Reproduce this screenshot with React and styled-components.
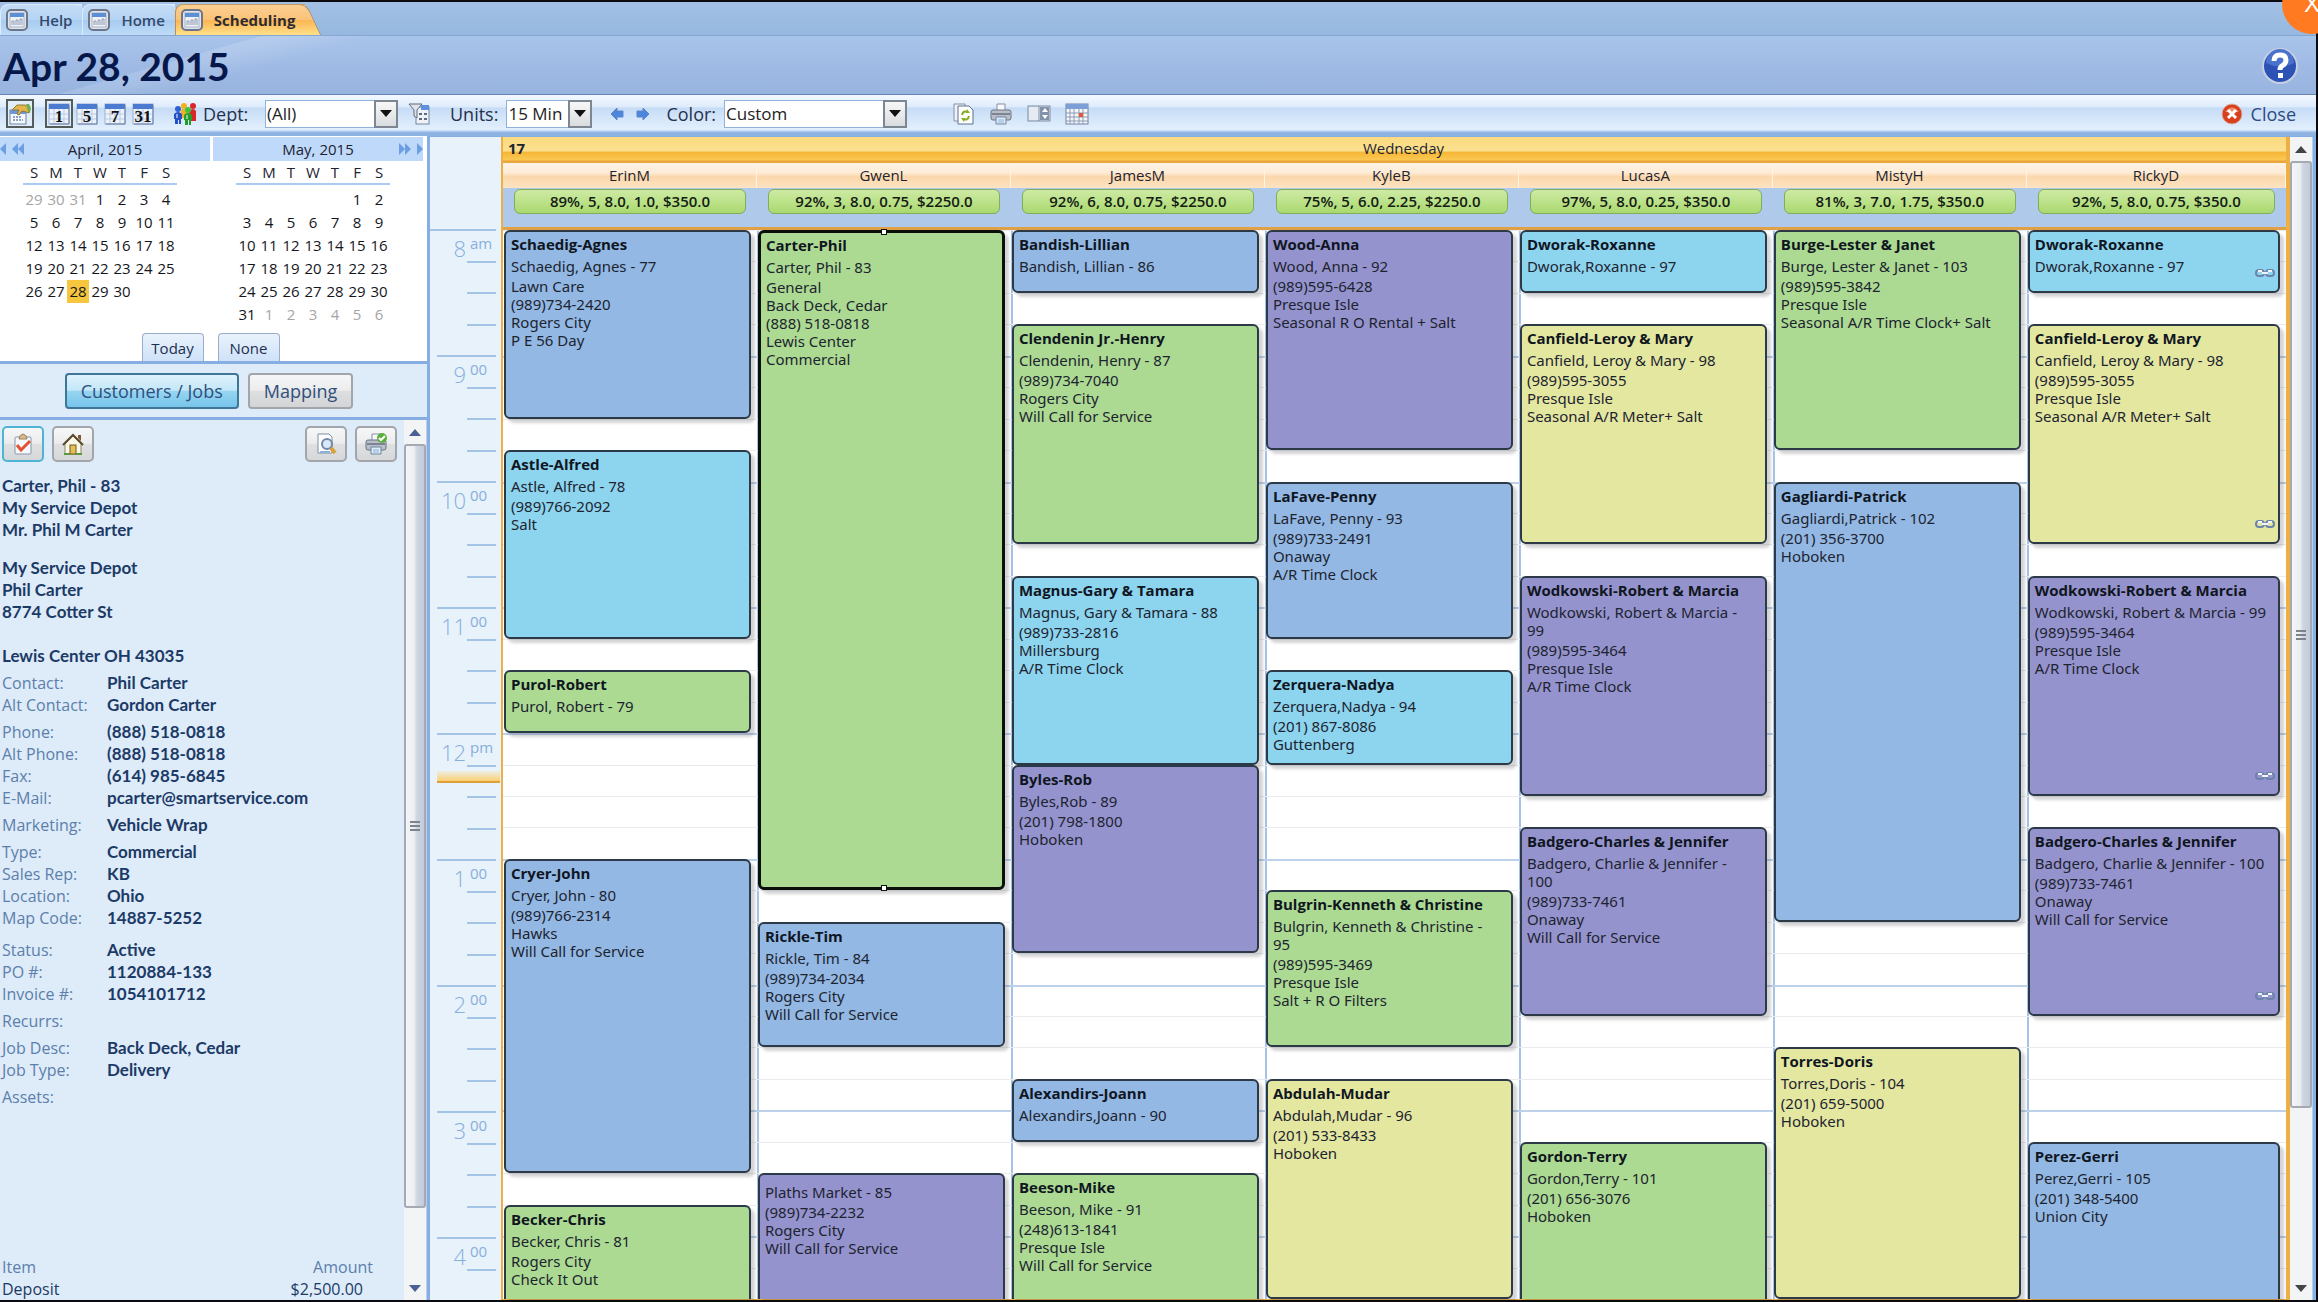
import React from 'react';
import styled, { createGlobalStyle, css } from 'styled-components';

const SLOT_COUNT = 34;

const COLORS = {
  blue: '#93b8e4',
  green: '#acda92',
  cyan: '#8dd4ef',
  purple: '#9593cd',
  yellow: '#e4e7a0',
};

const HOURS = [
  ['8', 'am'],
  ['9', '00'],
  ['10', '00'],
  ['11', '00'],
  ['12', 'pm'],
  ['1', '00'],
  ['2', '00'],
  ['3', '00'],
  ['4', '00'],
];

// from / to are 15 minute slots counted from 8 am
const TECHS = [
  {
    name: 'ErinM',
    stats: '89%, 5, 8.0, 1.0, $350.0',
    jobs: [
      { from: 0, to: 6, color: 'blue', title: 'Schaedig-Agnes', who: 'Schaedig, Agnes - 77', lines: ['Lawn Care', '(989)734-2420', 'Rogers City', 'P E 56 Day'] },
      { from: 7, to: 13, color: 'cyan', title: 'Astle-Alfred', who: 'Astle, Alfred - 78', lines: ['(989)766-2092', 'Salt'] },
      { from: 14, to: 16, color: 'green', title: 'Purol-Robert', who: 'Purol, Robert - 79', lines: [] },
      { from: 20, to: 30, color: 'blue', title: 'Cryer-John', who: 'Cryer, John - 80', lines: ['(989)766-2314', 'Hawks', 'Will Call for Service'] },
      { from: 31, to: 34, open: true, color: 'green', title: 'Becker-Chris', who: 'Becker, Chris - 81', lines: ['Rogers City', 'Check It Out'] },
    ],
  },
  {
    name: 'GwenL',
    stats: '92%, 3, 8.0, 0.75, $2250.0',
    jobs: [
      { from: 0, to: 21, selected: true, color: 'green', title: 'Carter-Phil', who: 'Carter, Phil - 83', lines: ['General', 'Back Deck, Cedar', '(888) 518-0818', 'Lewis Center', 'Commercial'] },
      { from: 22, to: 26, color: 'blue', title: 'Rickle-Tim', who: 'Rickle, Tim - 84', lines: ['(989)734-2034', 'Rogers City', 'Will Call for Service'] },
      { from: 30, to: 34, open: true, color: 'purple', who: 'Plaths Market - 85', lines: ['(989)734-2232', 'Rogers City', 'Will Call for Service'] },
    ],
  },
  {
    name: 'JamesM',
    stats: '92%, 6, 8.0, 0.75, $2250.0',
    jobs: [
      { from: 0, to: 2, color: 'blue', title: 'Bandish-Lillian', who: 'Bandish, Lillian - 86', lines: [] },
      { from: 3, to: 10, color: 'green', title: 'Clendenin Jr.-Henry', who: 'Clendenin, Henry - 87', lines: ['(989)734-7040', 'Rogers City', 'Will Call for Service'] },
      { from: 11, to: 17, color: 'cyan', title: 'Magnus-Gary & Tamara', who: 'Magnus, Gary & Tamara - 88', lines: ['(989)733-2816', 'Millersburg', 'A/R Time Clock'] },
      { from: 17, to: 23, color: 'purple', title: 'Byles-Rob', who: 'Byles,Rob - 89', lines: ['(201) 798-1800', 'Hoboken'] },
      { from: 27, to: 29, color: 'blue', title: 'Alexandirs-Joann', who: 'Alexandirs,Joann - 90', lines: [] },
      { from: 30, to: 34, open: true, color: 'green', title: 'Beeson-Mike', who: 'Beeson, Mike - 91', lines: ['(248)613-1841', 'Presque Isle', 'Will Call for Service'] },
    ],
  },
  {
    name: 'KyleB',
    stats: '75%, 5, 6.0, 2.25, $2250.0',
    jobs: [
      { from: 0, to: 7, color: 'purple', title: 'Wood-Anna', who: 'Wood, Anna - 92', lines: ['(989)595-6428', 'Presque Isle', 'Seasonal R O Rental + Salt'] },
      { from: 8, to: 13, color: 'blue', title: 'LaFave-Penny', who: 'LaFave, Penny - 93', lines: ['(989)733-2491', 'Onaway', 'A/R Time Clock'] },
      { from: 14, to: 17, color: 'cyan', title: 'Zerquera-Nadya', who: 'Zerquera,Nadya - 94', lines: ['(201) 867-8086', 'Guttenberg'] },
      { from: 21, to: 26, color: 'green', title: 'Bulgrin-Kenneth & Christine', who: 'Bulgrin, Kenneth & Christine - 95', lines: ['(989)595-3469', 'Presque Isle', 'Salt + R O Filters'] },
      { from: 27, to: 34, color: 'yellow', title: 'Abdulah-Mudar', who: 'Abdulah,Mudar - 96', lines: ['(201) 533-8433', 'Hoboken'] },
    ],
  },
  {
    name: 'LucasA',
    stats: '97%, 5, 8.0, 0.25, $350.0',
    jobs: [
      { from: 0, to: 2, color: 'cyan', title: 'Dworak-Roxanne', who: 'Dworak,Roxanne - 97', lines: [] },
      { from: 3, to: 10, color: 'yellow', title: 'Canfield-Leroy & Mary', who: 'Canfield, Leroy & Mary - 98', lines: ['(989)595-3055', 'Presque Isle', 'Seasonal A/R Meter+ Salt'] },
      { from: 11, to: 18, color: 'purple', title: 'Wodkowski-Robert & Marcia', who: 'Wodkowski, Robert & Marcia - 99', lines: ['(989)595-3464', 'Presque Isle', 'A/R Time Clock'] },
      { from: 19, to: 25, color: 'purple', title: 'Badgero-Charles & Jennifer', who: 'Badgero, Charlie & Jennifer - 100', lines: ['(989)733-7461', 'Onaway', 'Will Call for Service'] },
      { from: 29, to: 34, open: true, color: 'green', title: 'Gordon-Terry', who: 'Gordon,Terry - 101', lines: ['(201) 656-3076', 'Hoboken'] },
    ],
  },
  {
    name: 'MistyH',
    stats: '81%, 3, 7.0, 1.75, $350.0',
    jobs: [
      { from: 0, to: 7, color: 'green', title: 'Burge-Lester & Janet', who: 'Burge, Lester & Janet - 103', lines: ['(989)595-3842', 'Presque Isle', 'Seasonal A/R Time Clock+ Salt'] },
      { from: 8, to: 22, color: 'blue', title: 'Gagliardi-Patrick', who: 'Gagliardi,Patrick - 102', lines: ['(201) 356-3700', 'Hoboken'] },
      { from: 26, to: 34, color: 'yellow', title: 'Torres-Doris', who: 'Torres,Doris - 104', lines: ['(201) 659-5000', 'Hoboken'] },
    ],
  },
  {
    name: 'RickyD',
    stats: '92%, 5, 8.0, 0.75, $350.0',
    jobs: [
      { from: 0, to: 2, linked: true, color: 'cyan', title: 'Dworak-Roxanne', who: 'Dworak,Roxanne - 97', lines: [] },
      { from: 3, to: 10, linked: true, color: 'yellow', title: 'Canfield-Leroy & Mary', who: 'Canfield, Leroy & Mary - 98', lines: ['(989)595-3055', 'Presque Isle', 'Seasonal A/R Meter+ Salt'] },
      { from: 11, to: 18, linked: true, color: 'purple', title: 'Wodkowski-Robert & Marcia', who: 'Wodkowski, Robert & Marcia - 99', lines: ['(989)595-3464', 'Presque Isle', 'A/R Time Clock'] },
      { from: 19, to: 25, linked: true, color: 'purple', title: 'Badgero-Charles & Jennifer', who: 'Badgero, Charlie & Jennifer - 100', lines: ['(989)733-7461', 'Onaway', 'Will Call for Service'] },
      { from: 29, to: 34, open: true, color: 'blue', title: 'Perez-Gerri', who: 'Perez,Gerri - 105', lines: ['(201) 348-5400', 'Union City'] },
    ],
  },
];

const WEEKDAYS = ['S', 'M', 'T', 'W', 'T', 'F', 'S'];

// days of the neighbouring month start with a minus
const APRIL = [
  ['-29', '-30', '-31', '1', '2', '3', '4'],
  ['5', '6', '7', '8', '9', '10', '11'],
  ['12', '13', '14', '15', '16', '17', '18'],
  ['19', '20', '21', '22', '23', '24', '25'],
  ['26', '27', '28', '29', '30', '', ''],
];

const MAY = [
  ['', '', '', '', '', '1', '2'],
  ['3', '4', '5', '6', '7', '8', '9'],
  ['10', '11', '12', '13', '14', '15', '16'],
  ['17', '18', '19', '20', '21', '22', '23'],
  ['24', '25', '26', '27', '28', '29', '30'],
  ['31', '-1', '-2', '-3', '-4', '-5', '-6'],
];

const FIELD_GROUPS = [
  { gap: 5, fields: [['Contact:', 'Phil Carter'], ['Alt Contact:', 'Gordon Carter']] },
  { gap: 5, fields: [['Phone:', '(888) 518-0818'], ['Alt Phone:', '(888) 518-0818'], ['Fax:', '(614) 985-6845'], ['E-Mail:', 'pcarter@smartservice.com']] },
  { gap: 5, fields: [['Marketing:', 'Vehicle Wrap']] },
  { gap: 5, fields: [['Type:', 'Commercial'], ['Sales Rep:', 'KB'], ['Location:', 'Ohio'], ['Map Code:', '14887-5252']] },
  { gap: 10, fields: [['Status:', 'Active'], ['PO #:', '1120884-133'], ['Invoice #:', '1054101712']] },
  { gap: 5, fields: [['Recurrs:', '']] },
  { gap: 5, fields: [['Job Desc:', 'Back Deck, Cedar'], ['Job Type:', 'Delivery']] },
  { gap: 5, fields: [['Assets:', '']] },
];

/* ---------- icons ---------- */

const TabIcon = () => (
  <svg width="22" height="22" viewBox="0 0 22 22" aria-hidden="true">
    <rect x="1" y="1" width="20" height="20" rx="4" fill="#dfe5ef" stroke="#6d7688" strokeWidth="2" />
    <rect x="4" y="4" width="14" height="14" fill="#eef1f7" stroke="#a9b3c4" />
    <rect x="4" y="4" width="14" height="4" fill="#5d8fd6" />
    <path d="M6 16v-4h2v4M10 16v-5h2v5M14 16v-6h2v6" stroke="#8f9bb1" fill="none" />
  </svg>
);

const PropertiesIcon = () => (
  <svg width="24" height="24" viewBox="0 0 24 24" aria-hidden="true">
    <rect x="2" y="8" width="16" height="14" fill="#f4f7fc" stroke="#6b82a8" />
    <rect x="2" y="8" width="16" height="4" fill="#6d97d8" />
    <path d="M5 15h8M5 18h10" stroke="#8ea4c6" strokeWidth="2" strokeDasharray="2 1" />
    <path d="M4 8l5-5h8l4 3v5l-3-1-4-1-3 4-2-1 2-4z" fill="#e2b44a" stroke="#8a7a3c" />
    <path d="M18 2h3l2 4-1 5-2-2z" fill="#6fae4d" />
  </svg>
);

const DayIcon = ({ children }) => (
  <svg width="22" height="22" viewBox="0 0 22 22" aria-hidden="true">
    <rect x="1" y="1" width="20" height="20" fill="#eef3fb" stroke="#9db0cf" />
    <rect x="1" y="1" width="20" height="5" fill="#4a7bd0" />
    <path d="M6 6v15M11 6v15M16 6v15M1 11h20M1 16h20" stroke="#b9cbe6" />
    <path d="M21 2v19H2" stroke="#6b7fa3" fill="none" />
    <text x="11" y="19" textAnchor="middle" fontFamily="Liberation Serif, serif" fontWeight="700" fontSize="17" fill="#111">
      {children}
    </text>
  </svg>
);

const PeopleIcon = () => (
  <svg width="24" height="24" viewBox="0 0 24 24" aria-hidden="true">
    <circle cx="11" cy="4" r="3" fill="#f2b01e" />
    <rect x="8" y="7" width="6" height="9" rx="2" fill="#f2b01e" />
    <circle cx="20" cy="4" r="3" fill="#d9262b" />
    <path d="M16 9q4-4 7 0v10h-6z" fill="#d9262b" />
    <circle cx="5" cy="7" r="3" fill="#2d62d8" />
    <path d="M1 12q4-4 8 0v5h-1v5H6v-4H5v4H2v-5H1z" fill="#2450c8" />
    <circle cx="15" cy="8" r="3" fill="#3fc23f" />
    <path d="M11 13q4-4 8 0v5h-1v5h-2v-5h-1v5h-3v-5h-1z" fill="#1f9e2c" />
    <path d="M4 12v4M14 13v4" stroke="#fff" />
  </svg>
);

const FilterIcon = () => (
  <svg width="22" height="24" viewBox="0 0 22 24" aria-hidden="true">
    <rect x="8" y="5" width="13" height="17" fill="#eef2f8" stroke="#7587a3" />
    <rect x="13" y="3" width="8" height="5" fill="#5e8fe0" />
    <path d="M11 12h3M16 12h3M11 17h3M16 17h3" stroke="#5d6b80" strokeWidth="2" />
    <path d="M1 2h13l-5 6v8l-3-2V8z" fill="#dfe3ea" stroke="#5f6a7a" />
  </svg>
);

const ArrowIcon = ({ flip }) => (
  <svg width="14" height="14" viewBox="0 0 14 14" aria-hidden="true">
    <path d={flip ? 'M13 7L7 1v3H1v6h6v3z' : 'M1 7l6-6v3h6v6H7v3z'} fill="#4d87dd" stroke="#5c86c8" />
  </svg>
);

const RefreshIcon = () => (
  <svg width="22" height="24" viewBox="0 0 22 24" aria-hidden="true">
    <path d="M1 2h11v17H1z" fill="#eef1f6" stroke="#8492a8" />
    <path d="M5 4h11l4 4v14H5z" fill="#fdfefe" stroke="#5f7191" />
    <path d="M9 13q1-5 6-3M16 14q-1 5-6 3" stroke="#86ad24" strokeWidth="2" fill="none" />
    <path d="M14 7l3 4h-4zM11 20l-3-4h4z" fill="#86ad24" />
  </svg>
);

const PrinterIcon = ({ check }) => (
  <svg width="24" height="24" viewBox="0 0 24 24" aria-hidden="true">
    <path d="M8 2h8v8H8z" fill="#f7f9fc" stroke="#8591a5" />
    <rect x="2" y="8" width="20" height="10" rx="2" fill="#b9bec9" stroke="#6c7484" />
    <path d="M3 12h18" stroke="#7d8594" strokeWidth="2" />
    <path d="M7 15h10v7H7z" fill="#dcebf8" stroke="#71849f" />
    <path d="M9 18h6M9 20h6" stroke="#8fb6da" />
    {check && <circle cx="18" cy="6" r="5" fill="#58b03a" />}
    {check && <path d="M15 6l2 2 4-4" stroke="#fff" strokeWidth="2" fill="none" />}
  </svg>
);

const PaneIcon = () => (
  <svg width="24" height="18" viewBox="0 0 24 18" aria-hidden="true">
    <rect x="1" y="1" width="22" height="15" fill="#d8e0ec" stroke="#7f8da4" />
    <rect x="2" y="2" width="11" height="13" fill="#e6ebf3" />
    <path d="M12 1v15" stroke="#7f8da4" />
    <rect x="13" y="2" width="9" height="13" fill="#8392aa" />
    <path d="M15 7l3-4 3 4zM15 10l3 4 3-4z" fill="#fff" />
  </svg>
);

const GridIcon = () => (
  <svg width="24" height="22" viewBox="0 0 24 22" aria-hidden="true">
    <rect x="1" y="1" width="22" height="20" fill="#f4f6fa" stroke="#6f83a5" />
    <rect x="1" y="1" width="22" height="5" fill="#7c9fd6" />
    <path d="M5 6v15M9 6v15M14 6v15M18 6v15M1 10h22M1 14h22M1 18h22" stroke="#8c9bb3" />
    <rect x="14" y="10" width="4" height="4" fill="#e2572b" />
  </svg>
);

const CloseIcon = () => (
  <svg width="22" height="22" viewBox="0 0 22 22" aria-hidden="true">
    <circle cx="11" cy="11" r="10" fill="#d9411e" stroke="#d8aca0" />
    <path d="M4 9q7-9 14 0z" fill="#ee8f6f" />
    <path d="M7 7l8 8M15 7l-8 8" stroke="#fff" strokeWidth="3" />
  </svg>
);

const HelpIcon = () => (
  <svg width="38" height="38" viewBox="0 0 38 38" aria-hidden="true">
    <circle cx="19" cy="19" r="18" fill="#c6d0e2" />
    <circle cx="19" cy="19" r="16" fill="#2c52b5" />
    <path d="M5 16a14 14 0 0 1 28 0q-14 7-28 0z" fill="#4a71cb" />
    <path d="M13 14q0-6 6-6t6 5q0 4-4 6-2 1-2 4" stroke="#fff" strokeWidth="5" fill="none" />
    <rect x="17" y="26" width="5" height="5" fill="#fff" />
  </svg>
);

const ClipboardIcon = () => (
  <svg width="22" height="22" viewBox="0 0 22 22" aria-hidden="true">
    <rect x="3" y="4" width="16" height="17" rx="1" fill="#f5f8fc" stroke="#8595b0" />
    <path d="M7 6q0-4 4-5 4 1 4 5z" fill="#d9b98a" stroke="#9c8258" />
    <path d="M5 12l4 5 9-9" stroke="#e35332" strokeWidth="3" fill="none" />
  </svg>
);

const HouseIcon = () => (
  <svg width="24" height="22" viewBox="0 0 24 22" aria-hidden="true">
    <path d="M4 11v10h16V11l-8-8z" fill="#fbf8e8" stroke="#8e8766" />
    <path d="M17 2h3v6l-3-3z" fill="#7d5a34" />
    <path d="M2 12L12 2l10 10" stroke="#5a4a2c" strokeWidth="2" fill="none" />
    <rect x="9" y="12" width="6" height="9" fill="#e4c054" stroke="#6e5a1e" />
    <path d="M3 21h6M15 21h6" stroke="#5b9a3b" strokeWidth="2" />
  </svg>
);

const PreviewIcon = () => (
  <svg width="24" height="24" viewBox="0 0 24 24" aria-hidden="true">
    <path d="M4 2h11l3 3v16H4z" fill="#fff" stroke="#7d8ea9" />
    <path d="M6 20h10" stroke="#8fb0d8" strokeWidth="2" />
    <circle cx="13" cy="12" r="5" fill="#dbe9f7" stroke="#6f88ac" strokeWidth="2" />
    <path d="M17 16l4 5" stroke="#d8a238" strokeWidth="4" />
  </svg>
);

const ChainIcon = () => (
  <svg width="20" height="10" viewBox="0 0 20 10" aria-hidden="true">
    <rect x="1" y="2" width="8" height="6" rx="3" fill="none" stroke="#6c83ab" strokeWidth="2" />
    <rect x="11" y="2" width="8" height="6" rx="3" fill="none" stroke="#6c83ab" strokeWidth="2" />
    <path d="M3 3h4M13 3h4M7 5h6" stroke="#f1f5fb" strokeWidth="2" />
  </svg>
);

const Chevrons = ({ left, count }) => (
  <svg width={count * 6} height="12" viewBox={`0 0 ${count * 6} 12`} aria-hidden="true">
    {Array.from({ length: count }, (_, i) => (
      <path key={i} d={left ? `M${i * 6 + 6} 0v12l-6-6z` : `M${i * 6} 0v12l6-6z`} fill="#6b9fe2" />
    ))}
  </svg>
);

const Triangle = ({ up, color = '#4a5f92' }) => (
  <svg width="12" height="7" viewBox="0 0 12 7" aria-hidden="true">
    <path d={up ? 'M0 7l6-7 6 7z' : 'M0 0h12L6 7z'} fill={color} />
  </svg>
);

/* ---------- parts ---------- */

const Combo = ({ id, label, value, width }) => (
  <>
    <ComboLabel htmlFor={id}>{label}</ComboLabel>
    <ComboBox $width={width}>
      <Select id={id} defaultValue={value}>
        <option>{value}</option>
      </Select>
      <ComboArrow>
        <Triangle color="#111" />
      </ComboArrow>
    </ComboBox>
  </>
);

const Month = ({ title, weeks, today, side }) => (
  <div>
    <MonthHeader>
      {side === 'left' ? (
        <MonthNav aria-label="Previous months">
          <Chevrons left count={1} />
          <Chevrons left count={2} />
        </MonthNav>
      ) : (
        <span />
      )}
      <MonthTitle>{title}</MonthTitle>
      {side === 'right' && (
        <MonthNav aria-label="Next months">
          <Chevrons count={2} />
          <Chevrons count={1} />
        </MonthNav>
      )}
    </MonthHeader>
    <MonthTable>
      <thead>
        <tr>
          {WEEKDAYS.map((day, i) => (
            <DayName key={i}>{day}</DayName>
          ))}
        </tr>
      </thead>
      <tbody>
        {weeks.map((week, i) => (
          <tr key={i}>
            {week.map((day, j) => (
              <Day key={j} $muted={day.startsWith('-')} $today={day === today}>
                {day.replace('-', '')}
              </Day>
            ))}
          </tr>
        ))}
      </tbody>
    </MonthTable>
  </div>
);

const ScrollBar = ({ color, thumb, rest }) => (
  <ScrollTrack>
    <ScrollArrow>
      <Triangle up color={color} />
    </ScrollArrow>
    <ScrollThumb $size={thumb}>
      <Grip />
    </ScrollThumb>
    <ScrollRest $size={rest} />
    <ScrollArrow>
      <Triangle color={color} />
    </ScrollArrow>
  </ScrollTrack>
);

const Job = ({ job }) => (
  <JobCard $job={job}>
    {job.title && <JobTitle>{job.title}</JobTitle>}
    <JobWho>{job.who}</JobWho>
    {job.lines.map((line) => (
      <JobLine key={line}>{line}</JobLine>
    ))}
    {job.linked && (
      <JobLink>
        <ChainIcon />
      </JobLink>
    )}
    {job.selected && <Handle $edge="top" />}
    {job.selected && <Handle $edge="bottom" />}
  </JobCard>
);

const Sidebar = () => (
  <Side>
    <Calendars>
      <Months>
        <Month title="April, 2015" weeks={APRIL} today="28" side="left" />
        <Month title="May, 2015" weeks={MAY} side="right" />
      </Months>
      <CalendarButtons>
        <CalendarButton>Today</CalendarButton>
        <CalendarButton>None</CalendarButton>
      </CalendarButtons>
    </Calendars>
    <Switcher>
      <SwitchButton $active>Customers / Jobs</SwitchButton>
      <SwitchButton>Mapping</SwitchButton>
    </Switcher>
    <Details>
      <DetailsBody>
        <DetailTools>
          <ToolGroup>
            <IconButton $active aria-label="Job">
              <ClipboardIcon />
            </IconButton>
            <IconButton aria-label="Customer">
              <HouseIcon />
            </IconButton>
          </ToolGroup>
          <ToolGroup>
            <IconButton aria-label="Preview">
              <PreviewIcon />
            </IconButton>
            <IconButton aria-label="Print">
              <PrinterIcon check />
            </IconButton>
          </ToolGroup>
        </DetailTools>
        <Address>
          Carter, Phil - 83
          <br />
          My Service Depot
          <br />
          Mr. Phil M Carter
        </Address>
        <Address>
          My Service Depot
          <br />
          Phil Carter
          <br />
          8774 Cotter St
          <br />
          <br />
          Lewis Center OH 43035
        </Address>
        {FIELD_GROUPS.map((group) => (
          <FieldGroup key={group.fields[0][0]} $gap={group.gap}>
            {group.fields.map(([label, value]) => (
              <Field key={label}>
                <FieldLabel>{label}</FieldLabel>
                <FieldValue>{value}</FieldValue>
              </Field>
            ))}
          </FieldGroup>
        ))}
        <ItemTable>
          <thead>
            <tr>
              <ItemHead>Item</ItemHead>
              <ItemHead $right>Amount</ItemHead>
            </tr>
          </thead>
          <tbody>
            <tr>
              <ItemCell>Deposit</ItemCell>
              <ItemCell $right>$2,500.00</ItemCell>
            </tr>
          </tbody>
        </ItemTable>
      </DetailsBody>
      <ScrollBar color="#4a5f92" thumb={765} rest={68} />
    </Details>
  </Side>
);

const Schedule = () => (
  <ScheduleArea>
    <Gutter>
      <GutterHead />
      <GutterBody>
        {Array.from({ length: SLOT_COUNT }, (_, i) => (
          <Tick key={i} $row={i + 1} $hour={i % 4 === 0} />
        ))}
        {HOURS.map(([hour, suffix], i) => (
          <Hour key={hour} $row={i * 4 + 1}>
            <HourNumber>{hour}</HourNumber>
            <HourSuffix>{suffix}</HourSuffix>
          </Hour>
        ))}
        <NowMarker />
      </GutterBody>
    </Gutter>
    <Board>
      <DayBar>
        <DayNumber>17</DayNumber>
        <Weekday>Wednesday</Weekday>
      </DayBar>
      <NameRow>
        {TECHS.map((tech) => (
          <TechName key={tech.name}>{tech.name}</TechName>
        ))}
      </NameRow>
      <StatRow>
        {TECHS.map((tech) => (
          <Stat key={tech.name}>{tech.stats}</Stat>
        ))}
      </StatRow>
      <Columns>
        {TECHS.map((tech) => (
          <Column key={tech.name}>
            {Array.from({ length: SLOT_COUNT }, (_, i) => (
              <Slot key={i} $row={i + 1} $hour={i % 4 === 0 && i > 0} />
            ))}
            {tech.jobs.map((job) => (
              <Job key={job.from} job={job} />
            ))}
          </Column>
        ))}
      </Columns>
    </Board>
    <ScrollBar color="#444" thumb={946} rest={168} />
  </ScheduleArea>
);

const App = () => (
  <>
    <GlobalStyle />
    <Window>
      <Tabs>
        <Tab>
          <TabIcon />
          <span>Help</span>
        </Tab>
        <Tab>
          <TabIcon />
          <span>Home</span>
        </Tab>
        <Tab $active>
          <TabIcon />
          <span>Scheduling</span>
        </Tab>
      </Tabs>
      <TitleBand>
        <DateTitle>Apr 28, 2015</DateTitle>
        <PlainButton aria-label="Help">
          <HelpIcon />
        </PlainButton>
      </TitleBand>
      <Toolbar>
        <FramedButton $framed aria-label="Properties">
          <PropertiesIcon />
        </FramedButton>
        <DayButtons>
          <FramedButton $framed>
            <DayIcon>1</DayIcon>
          </FramedButton>
          <FramedButton>
            <DayIcon>5</DayIcon>
          </FramedButton>
          <FramedButton>
            <DayIcon>7</DayIcon>
          </FramedButton>
          <FramedButton>
            <DayIcon>31</DayIcon>
          </FramedButton>
        </DayButtons>
        <ToolbarGroup $before={16} $gap={6}>
          <PeopleIcon />
          <Combo id="dept" label="Dept:" value="(All)" width={133} />
        </ToolbarGroup>
        <ToolbarGroup $before={10}>
          <PlainButton aria-label="Filter">
            <FilterIcon />
          </PlainButton>
        </ToolbarGroup>
        <ToolbarGroup $before={20}>
          <Combo id="units" label="Units:" value="15 Min" width={86} />
        </ToolbarGroup>
        <ToolbarGroup $before={18} $gap={12}>
          <PlainButton aria-label="Back">
            <ArrowIcon />
          </PlainButton>
          <PlainButton aria-label="Forward">
            <ArrowIcon flip />
          </PlainButton>
        </ToolbarGroup>
        <ToolbarGroup $before={16}>
          <Combo id="color" label="Color:" value="Custom" width={183} />
        </ToolbarGroup>
        <ToolbarGroup $before={46} $gap={14}>
          <PlainButton aria-label="Refresh">
            <RefreshIcon />
          </PlainButton>
          <PlainButton aria-label="Print">
            <PrinterIcon />
          </PlainButton>
          <PlainButton aria-label="Panes">
            <PaneIcon />
          </PlainButton>
          <PlainButton aria-label="Calendar">
            <GridIcon />
          </PlainButton>
        </ToolbarGroup>
        <CloseButton>
          <CloseIcon />
          Close
        </CloseButton>
      </Toolbar>
      <Main>
        <Sidebar />
        <Schedule />
      </Main>
    </Window>
    <Dismiss aria-label="Dismiss">X</Dismiss>
  </>
);

/* ---------- styles ---------- */

const GlobalStyle = createGlobalStyle`
  * {
    box-sizing: border-box;
  }

  body {
    margin: 0;
    font-family: 'Open Sans', 'Noto Sans', sans-serif;
    font-size: 15px;
    color: #1d2430;
  }

  button {
    padding: 0;
    border: 0;
    background: none;
    font-family: inherit;
    font-size: inherit;
    color: inherit;
  }

  svg {
    display: block;
    flex: none;
  }
`;

const Window = styled.div`
  display: flex;
  flex-direction: column;
  height: 100vh;
  overflow: hidden;
  border: 2px solid #0b0b0f;
  border-left: 0;
  background: #98bae4;
`;

const Tabs = styled.nav`
  display: flex;
  height: 34px;
  padding-top: 2px;
  background: linear-gradient(#a3c0e4, #96b8e0);
  border-bottom: 1px solid #86a6d3;
`;

const tabSurface = css`
  background: ${(props) =>
    props.$active
      ? 'linear-gradient(#fbcf92, #fbc277 50%, #fbb653 52%, #ffe08a)'
      : 'linear-gradient(#c3dcf6, #b4d4f4 50%, #a8cbf0 52%, #bfdcf8)'};
  border-top: 1px solid ${(props) => (props.$active ? '#c69a5c' : '#dcebfb')};
`;

const Tab = styled.button`
  ${tabSurface}
  position: relative;
  display: flex;
  align-items: center;
  gap: 11px;
  padding: 0 10px 0 5px;
  border-left: 1px solid ${(props) => (props.$active ? '#b98f57' : '#dcebfb')};
  border-radius: 8px 0 0 0;
  color: ${(props) => (props.$active ? '#2d2a33' : '#33486b')};
  font-weight: ${(props) => (props.$active ? 700 : 600)};

  span {
    position: relative;
    z-index: 1;
  }

  &::after {
    ${tabSurface}
    content: '';
    position: absolute;
    top: -1px;
    bottom: 0;
    right: -9px;
    width: 24px;
    border-right: 1px solid ${(props) => (props.$active ? '#a98a62' : '#8fb1dc')};
    border-radius: 0 8px 0 0;
    transform: skewX(25deg);
  }
`;

const TitleBand = styled.header`
  display: flex;
  align-items: center;
  justify-content: space-between;
  height: 59px;
  padding: 2px 17px 0 3px;
  background:
    linear-gradient(164deg, transparent 0 42%, rgba(255, 255, 255, 0.14) 42% 46%, transparent 60%) 0 0 / 420px 100% no-repeat,
    linear-gradient(#a9c4ea, #9db9e4 60%, #97b4df);
  border-bottom: 1px solid #6584b4;
`;

const DateTitle = styled.h1`
  margin: 0;
  font-family: Lato, 'Open Sans', sans-serif;
  font-size: 39px;
  font-weight: 700;
  line-height: 48px;
  color: #06184a;
`;

const PlainButton = styled.button`
  display: flex;
  align-items: center;
`;

const Toolbar = styled.div`
  display: flex;
  align-items: center;
  height: 41px;
  padding: 0 20px 4px 6px;
  background: linear-gradient(#f4f9ff, #dfecfc 28%, #c6dcf6 32%, #d6e7fa 60%, #e2effd 84%, #b9d3f1 88%, #8eb2e2 92%);
  font-size: 18px;
`;

const FramedButton = styled.button`
  display: flex;
  align-items: center;
  justify-content: center;
  width: 28px;
  height: 29px;
  border: 2px solid ${(props) => (props.$framed ? '#555c5c' : 'transparent')};
  background: ${(props) => (props.$framed ? '#e3edf9' : 'none')};
`;

const DayButtons = styled.div`
  display: flex;
  margin-left: 11px;
`;

const ToolbarGroup = styled.div`
  display: flex;
  align-items: center;
  gap: ${(props) => props.$gap || 0}px;
  margin-left: ${(props) => props.$before}px;
`;

const ComboLabel = styled.label`
  min-width: 48px;
  color: #26314c;
  white-space: nowrap;
`;

const ComboBox = styled.div`
  display: grid;
  width: ${(props) => props.$width}px;
  height: 28px;
  margin-left: 8px;
`;

const Select = styled.select`
  grid-area: 1 / 1;
  width: 100%;
  padding: 0 1px;
  appearance: none;
  border: 1px solid #8fb2dd;
  border-radius: 0;
  background: #fff;
  font-family: inherit;
  font-size: 17px;
  color: #222;
`;

const ComboArrow = styled.span`
  grid-area: 1 / 1;
  justify-self: end;
  display: flex;
  align-items: center;
  justify-content: center;
  width: 24px;
  border: 2px solid #7d8793;
  background: linear-gradient(#f7f7f7, #d9dcdf);
  pointer-events: none;
`;

const CloseButton = styled.button`
  display: flex;
  align-items: center;
  gap: 8px;
  margin-left: auto;
  font-size: 18px;
  color: #2c4a80;
`;

const Main = styled.main`
  flex: 1;
  display: flex;
  min-height: 0;
`;

const Side = styled.aside`
  flex: none;
  display: flex;
  flex-direction: column;
  width: 430px;
  border-right: 3px solid #86aee2;
`;

const Calendars = styled.section`
  display: flex;
  flex-direction: column;
  height: 225px;
  padding-top: 1px;
  background: #fff;
`;

const Months = styled.div`
  display: grid;
  grid-template-columns: 1fr 1fr;
  gap: 3px;
  padding-right: 4px;
`;

const MonthHeader = styled.div`
  display: grid;
  grid-template-columns: 24px 1fr 24px;
  align-items: center;
  height: 24px;
  background: #bfd9fb;
`;

const MonthNav = styled.button`
  display: flex;
  justify-content: space-between;
`;

const MonthTitle = styled.span`
  text-align: center;
`;

const MonthTable = styled.table`
  margin-left: 23px;
  border-collapse: collapse;
  table-layout: fixed;
  width: 154px;

  thead::after {
    content: '';
    display: block;
    height: 3px;
  }
`;

const DayName = styled.th`
  height: 23px;
  padding: 0;
  border-bottom: 2px solid #a9cbf3;
  font-weight: 400;
  line-height: 20px;
`;

const Day = styled.td`
  height: 23px;
  padding: 0;
  text-align: center;
  line-height: 23px;
  color: ${(props) => (props.$muted ? '#a5a5a5' : '#15151c')};
  background: ${(props) => (props.$today ? '#f6c73e' : 'none')};
`;

const CalendarButtons = styled.div`
  display: flex;
  justify-content: center;
  gap: 14px;
  margin-top: auto;
  padding-right: 6px;
`;

const CalendarButton = styled.button`
  width: 62px;
  height: 28px;
  border: 1px solid #98aecb;
  border-bottom: 0;
  border-radius: 4px 4px 0 0;
  background: linear-gradient(#e9f2fc, #cfe2f8);
  color: #1c2f50;
`;

const Switcher = styled.div`
  display: flex;
  align-items: center;
  justify-content: center;
  gap: 9px;
  height: 59px;
  padding-right: 9px;
  background: #deebf9;
  border-top: 3px solid #86aee2;
  border-bottom: 3px solid #86aee2;
`;

const SwitchButton = styled.button`
  height: 36px;
  padding: 0 14px;
  border: 2px solid ${(props) => (props.$active ? '#3f7696' : '#a2a6ab')};
  border-radius: 4px;
  background: ${(props) =>
    props.$active
      ? 'linear-gradient(#dff2fb, #c3e7f8 48%, #97d5f1 50%, #76c5ea)'
      : 'linear-gradient(#f5f6f7, #ececed 48%, #dedfe0 50%, #d3d4d6)'};
  font-size: 18px;
  color: #2f4f7c;
`;

const Details = styled.section`
  flex: 1;
  display: flex;
  min-height: 0;
  background: #deebf9;
`;

const DetailsBody = styled.div`
  flex: 1;
  display: flex;
  flex-direction: column;
  padding: 6px 0 0 2px;
  font-size: 16px;
  line-height: 22px;
  color: #1c3a66;
`;

const DetailTools = styled.div`
  display: flex;
  justify-content: space-between;
  padding-right: 7px;
  margin-bottom: 13px;
`;

const ToolGroup = styled.div`
  display: flex;
  gap: 8px;
`;

const IconButton = styled.button`
  display: flex;
  align-items: center;
  justify-content: center;
  width: 42px;
  height: 36px;
  border: 2px solid ${(props) => (props.$active ? '#4fb3d6' : '#a2a6ab')};
  border-radius: 5px;
  background: linear-gradient(#f6f7f8, #ececed 48%, #dfe0e1 50%, #d6d7d9);
`;

const Address = styled.p`
  margin: 0;
  font-family: Lato, 'Open Sans', sans-serif;
  font-size: 17px;
  font-weight: 700;

  & + & {
    margin-top: 16px;
  }
`;

const FieldGroup = styled.dl`
  margin: ${(props) => props.$gap}px 0 0;
`;

const Field = styled.div`
  display: grid;
  grid-template-columns: 105px 1fr;
  height: 22px;
`;

const FieldLabel = styled.dt`
  color: #5b80ab;
`;

const FieldValue = styled.dd`
  margin: 0;
  font-family: Lato, 'Open Sans', sans-serif;
  font-size: 17px;
  font-weight: 700;
`;

const ItemTable = styled.table`
  width: 100%;
  margin-top: auto;
  border-collapse: collapse;
`;

const itemBox = css`
  height: 22px;
  padding: 0;
  text-align: ${(props) => (props.$right ? 'right' : 'left')};
  font-weight: 400;
`;

const ItemHead = styled.th`
  ${itemBox}
  padding-right: ${(props) => (props.$right ? '31px' : '0')};
  color: #5b80ab;
`;

const ItemCell = styled.td`
  ${itemBox}
  padding-right: ${(props) => (props.$right ? '41px' : '0')};
`;

const ScrollTrack = styled.div`
  flex: none;
  display: flex;
  flex-direction: column;
  width: 23px;
  border-right: 1px solid #b9cfec;
  background: #f3f4f6;
`;

const ScrollArrow = styled.div`
  display: flex;
  align-items: center;
  justify-content: center;
  height: 24px;
`;

const ScrollThumb = styled.div`
  flex: ${(props) => props.$size};
  display: flex;
  align-items: center;
  justify-content: center;
  border: 2px solid #a4a9b2;
  border-radius: 3px;
  background: linear-gradient(90deg, #f4f5f7, #eceef2 45%, #cfd6e2 60%, #c3cbd9);
`;

const ScrollRest = styled.div`
  flex: ${(props) => props.$size};
`;

const Grip = styled.div`
  width: 10px;
  height: 10px;
  background: repeating-linear-gradient(#7d838d 0 2px, transparent 2px 4px);
`;

const ScheduleArea = styled.section`
  flex: 1;
  display: flex;
  min-width: 0;
  border-right: 3px solid #86b3e6;
  border-top: 1px solid #86aee2;
`;

const Gutter = styled.div`
  flex: none;
  display: flex;
  flex-direction: column;
  width: 71px;
  background: #e8f2fb;
`;

const GutterHead = styled.div`
  flex: none;
  height: 92px;
`;

const GutterBody = styled.div`
  position: relative;
  flex: 1;
  display: grid;
  grid-template-rows: repeat(${SLOT_COUNT}, minmax(0, 1fr));
  min-height: 0;
`;

const Tick = styled.div`
  grid-column: 1;
  grid-row: ${(props) => props.$row};
  margin: 0 5px 0 ${(props) => (props.$row === 1 ? 0 : props.$hour ? 7 : 37)}px;
  border-top: 2px solid #a3c4e4;
`;

const Hour = styled.div`
  grid-column: 1;
  grid-row: ${(props) => props.$row};
  display: grid;
  grid-template-columns: 36px 1fr;
  gap: 4px;
  color: #86afdb;
`;

const HourNumber = styled.span`
  text-align: right;
  font-size: 22px;
  font-weight: 300;
  line-height: 38px;
`;

const HourSuffix = styled.span`
  font-size: 15px;
  line-height: 28px;
`;

const NowMarker = styled.div`
  position: absolute;
  left: 7px;
  right: 1px;
  top: 50.6%;
  height: 12px;
  border-bottom: 2px solid #dfa03a;
  background: linear-gradient(rgba(253, 220, 138, 0.2), #fbd071);
`;

const Board = styled.div`
  flex: 1;
  display: flex;
  flex-direction: column;
  min-width: 0;
  border: 0 solid #eeb044;
  border-width: 0 4px 1px 2px;
  background: #fff;
`;

const techGrid = css`
  display: grid;
  grid-template-columns: repeat(6, minmax(0, 49fr)) minmax(0, 50fr);
`;

const DayBar = styled.div`
  flex: none;
  display: grid;
  grid-template-columns: 60px 1fr 42px;
  align-items: center;
  height: 26px;
  padding: 0 5px 4px;
  background: linear-gradient(#fbda80, #fbe08e 54%, #f5b636 58%, #fbc852 88%, #e9a63c 92%);
`;

const DayNumber = styled.span`
  font-weight: 700;
`;

const Weekday = styled.span`
  text-align: center;
`;

const NameRow = styled.div`
  ${techGrid}
  flex: none;
  height: 25px;
  background: linear-gradient(#fef3e6, #fdebd5 40%, #fbd7aa 55%, #fde3c2);
`;

const TechName = styled.div`
  line-height: 24px;
  text-align: center;
  border-right: 1px solid #fff4e4;
`;

const StatRow = styled.div`
  ${techGrid}
  flex: none;
  height: 42px;
  padding-top: 1px;
  background: #afc9ea;
  border-bottom: 3px solid #e0a046;
`;

const Stat = styled.div`
  height: 25px;
  margin: 0 11px;
  border: 1px solid #7fae5c;
  border-radius: 6px;
  background: linear-gradient(#cdeaa4, #bce28a 50%, #aad86e);
  text-align: center;
  font-weight: 600;
  line-height: 23px;
  color: #141c14;
`;

const Columns = styled.div`
  ${techGrid}
  flex: 1;
  min-height: 0;
`;

const Column = styled.div`
  display: grid;
  grid-template-columns: minmax(0, 1fr);
  grid-template-rows: repeat(${SLOT_COUNT}, minmax(0, 1fr));
  min-height: 0;

  & + & {
    box-shadow: inset 2px 0 #a5c3e8;
  }
`;

const Slot = styled.div`
  grid-column: 1;
  grid-row: ${(props) => props.$row};
  border-top: ${(props) => (props.$hour ? '2px solid #bdd1e8' : '1px solid #e9ebee')};
`;

const JobCard = styled.article`
  position: relative;
  grid-column: 1;
  grid-row: ${({ $job }) => `${$job.from + 1} / ${$job.to + 1}`};
  min-height: 0;
  margin: 0 6px 0 1px;
  padding: ${({ $job }) => ($job.title ? 1 : 6)}px ${({ $job }) => ($job.linked ? 2 : 14)}px 0 5px;
  border: 2px solid ${({ $job }) => ($job.selected ? '#0a0f0a' : '#2c3946')};
  border-width: ${({ $job }) => ($job.selected ? '3px' : $job.open ? '2px 2px 0' : '2px')};
  border-radius: ${({ $job }) => ($job.open ? '6px 6px 0 0' : '6px')};
  background: ${({ $job }) => COLORS[$job.color]};
  box-shadow: 4px 4px 3px rgba(60, 60, 70, 0.22);
  font-family: 'Noto Sans', 'Open Sans', sans-serif;
  line-height: 18px;
`;

const JobTitle = styled.h2`
  margin: 0;
  font-family: 'Open Sans', sans-serif;
  font-size: 15px;
  font-weight: 700;
  line-height: 22px;
  white-space: nowrap;
  color: #10161f;
`;

const JobWho = styled.p`
  margin: 0;
  padding: 2px 0;
`;

const JobLine = styled.p`
  margin: 0;
`;

const JobLink = styled.span`
  position: absolute;
  right: 3px;
  bottom: 13px;
`;

const Handle = styled.i`
  position: absolute;
  left: 50%;
  ${(props) => props.$edge}: -4px;
  width: 6px;
  height: 6px;
  border: 1px solid #111;
  background: #fff;
`;

const Dismiss = styled.button`
  position: fixed;
  top: -26px;
  right: -24px;
  width: 60px;
  height: 60px;
  border-radius: 50%;
  background: #ff7a21;
  font-family: 'Liberation Sans', sans-serif;
  font-size: 24px;
  color: #fff;
`;

export default App;
